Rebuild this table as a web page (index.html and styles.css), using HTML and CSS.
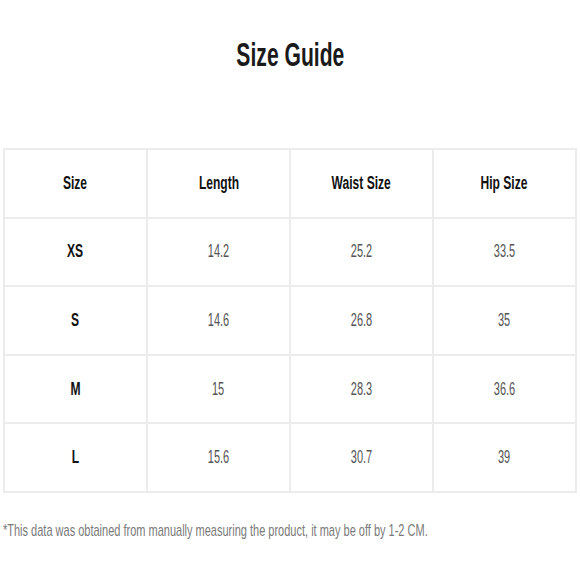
FILE: index.html
```html
<!DOCTYPE html>
<html lang="en">
<head>
<meta charset="utf-8">
<title>Size Guide</title>
<link rel="stylesheet" href="styles.css">
</head>
<body>
<div class="page">
  <h1 class="title"><span class="sq">Size Guide</span></h1>
  <table class="guide">
    <tr class="head">
      <th><span class="sq">Size</span></th>
      <th><span class="sq">Length</span></th>
      <th><span class="sq">Waist Size</span></th>
      <th><span class="sq">Hip Size</span></th>
    </tr>
    <tr>
      <th><span class="sq">XS</span></th>
      <td><span class="sq">14.2</span></td>
      <td><span class="sq">25.2</span></td>
      <td><span class="sq">33.5</span></td>
    </tr>
    <tr>
      <th><span class="sq">S</span></th>
      <td><span class="sq">14.6</span></td>
      <td><span class="sq">26.8</span></td>
      <td><span class="sq">35</span></td>
    </tr>
    <tr>
      <th><span class="sq">M</span></th>
      <td><span class="sq">15</span></td>
      <td><span class="sq">28.3</span></td>
      <td><span class="sq">36.6</span></td>
    </tr>
    <tr>
      <th><span class="sq">L</span></th>
      <td><span class="sq">15.6</span></td>
      <td><span class="sq">30.7</span></td>
      <td><span class="sq">39</span></td>
    </tr>
  </table>
  <p class="note"><span class="sq">*This data was obtained from manually measuring the product, it may be off by 1-2 CM.</span></p>
</div>
</body>
</html>
```
FILE: styles.css
```css
html, body {
  margin: 0;
  padding: 0;
  background: #ffffff;
}
body {
  font-family: "Liberation Sans", Arial, sans-serif;
  width: 580px;
  height: 580px;
  overflow: hidden;
}
.page {
  padding: 35px 3px 0 3px;
}
.sq {
  display: inline-block;
  white-space: nowrap;
  transform-origin: center center;
}
.title {
  margin: 0;
  height: 113px;
  font-size: 33px;
  line-height: 40px;
  font-weight: 700;
  color: #1a1a1a;
  text-align: center;
}
.title .sq {
  transform: scaleX(0.64);
}
.guide {
  width: 574px;
  border-collapse: collapse;
  table-layout: fixed;
}
.guide th,
.guide td {
  height: 66.6px;
  padding: 0;
  border: 2px solid #ececec;
  text-align: center;
  vertical-align: middle;
  font-size: 18px;
}
.guide th {
  font-weight: 700;
  color: #111111;
}
.guide th .sq {
  transform: scaleX(0.67);
}
.guide td {
  font-weight: 400;
  color: #555555;
}
.guide td .sq {
  transform: scaleX(0.61);
}
.note {
  margin: 28px 0 0 0;
  font-size: 17px;
  line-height: 20px;
  color: #7a7a7a;
  overflow: hidden;
  white-space: nowrap;
}
.note .sq {
  transform-origin: left center;
  transform: scaleX(0.647);
}
```
